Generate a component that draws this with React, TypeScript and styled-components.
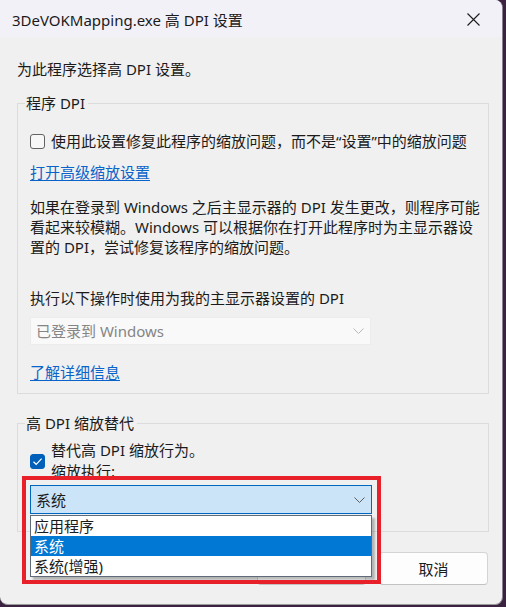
import { createGlobalStyle } from "styled-components";
import styled from "styled-components";

const GlobalStyle = createGlobalStyle`
    html, body {
        margin: 0;
        padding: 0;
        background: #3b2240;
    }
    body {
        font-family: "Noto Sans", "Noto Sans CJK SC", sans-serif;
        font-size: 15px;
        color: #1b1b1b;
    }
`;

const options = ["应用程序", "系统", "系统(增强)"];

export default function App() {
    return (
        <>
            <GlobalStyle />
            <Window>
                <TitleBar>
                    <Title>3DeVOKMapping.exe 高 DPI 设置</Title>
                    <CloseButton aria-label="Close">
                        <svg width="13" height="13" viewBox="0 0 13 13">
                            <path d="M0.5 0.5L12.5 12.5M12.5 0.5L0.5 12.5" stroke="#1b1b1b" strokeWidth="1.1" />
                        </svg>
                    </CloseButton>
                </TitleBar>

                <Body>
                    <Intro>为此程序选择高 DPI 设置。</Intro>

                    <Group $padBottom={11}>
                        <Legend>程序 DPI</Legend>
                        <CheckRow $top={18}>
                            <CheckBox $checked={false} />
                            <CheckText>使用此设置修复此程序的缩放问题，而不是“设置”中的缩放问题</CheckText>
                        </CheckRow>
                        <Link $top={11}>打开高级缩放设置</Link>
                        <Paragraph>
                            如果在登录到 Windows 之后主显示器的 DPI 发生更改，则程序可能看起来较模糊。Windows 可以根据你在打开此程序时为主显示器设置的 DPI，尝试修复该程序的缩放问题。
                        </Paragraph>
                        <Label>执行以下操作时使用为我的主显示器设置的 DPI</Label>
                        <Select $disabled>
                            <span>已登录到 Windows</span>
                            <Chevron color="#b8b8b8" />
                        </Select>
                        <Link $top={17}>了解详细信息</Link>
                    </Group>

                    <Group $padBottom={17} $top={19}>
                        <Legend>高 DPI 缩放替代</Legend>
                        <CheckRow $top={7}>
                            <CheckBox $checked>
                                <svg width="11" height="9" viewBox="0 0 11 9">
                                    <path d="M1.5 4.8L4.2 7.3L9.6 1.6" fill="none" stroke="#fff" strokeWidth="1.2" />
                                </svg>
                            </CheckBox>
                            <CheckLines>
                                <span>替代高 DPI 缩放行为。</span>
                                <span>缩放执行:</span>
                            </CheckLines>
                        </CheckRow>
                        <ComboWrap>
                            <Select $focused>
                                <span>系统</span>
                                <Chevron color="#5d5d5d" />
                            </Select>
                            <OptionList>
                                {options.map((o) => (
                                    <Option key={o} $selected={o === "系统"}>{o}</Option>
                                ))}
                            </OptionList>
                            <Highlight />
                        </ComboWrap>
                    </Group>

                    <ButtonRow>
                        <Button>确定</Button>
                        <Button>取消</Button>
                    </ButtonRow>
                </Body>
            </Window>
        </>
    );
}

const Chevron = ({ color }: { color: string }) => (
    <svg width="11" height="6" viewBox="0 0 11 6">
        <path d="M0.5 0.5L5.5 5.5L10.5 0.5" fill="none" stroke={color} strokeWidth="1" />
    </svg>
);

/* -------------------- Styled Components -------------------- */

const Window = styled.div`
    position: relative;
    width: 502px;
    height: 604px;
    background: #f0f0f0;
    border-right: 1px solid #8a7f8e;
    border-bottom: 1px solid #9a9a9a;
    border-radius: 0 8px 8px 8px;
    overflow: hidden;
    display: flex;
    flex-direction: column;
`;

const TitleBar = styled.div`
    height: 37px;
    flex-shrink: 0;
    background: #f3f1f8;
    display: flex;
    align-items: center;
    justify-content: space-between;
    padding-left: 12px;
`;

const Title = styled.div`
    font-size: 15px;
    line-height: 20px;
    margin-top: 2px;
`;

const CloseButton = styled.div`
    width: 46px;
    height: 37px;
    display: flex;
    align-items: center;
    justify-content: center;
    margin-right: 6px;
    margin-top: 2px;
`;

const Body = styled.div`
    padding: 22px 13px 0 17px;
    display: flex;
    flex-direction: column;
`;

const Intro = styled.div`
    line-height: 20px;
    margin-bottom: 14px;
`;

const Group = styled.fieldset<{ $padBottom: number; $top?: number }>`
    margin: ${({ $top }) => $top ?? 0}px 0 0 0;
    padding: 0 12px ${({ $padBottom }) => $padBottom}px 12px;
    border: 1px solid #dcdcdc;
    min-width: 0;
`;

const Legend = styled.legend`
    padding: 0 3px 0 1px;
    margin-left: -5px;
    line-height: 20px;
`;

const CheckRow = styled.div<{ $top: number }>`
    display: flex;
    align-items: center;
    gap: 6px;
    margin-top: ${({ $top }) => $top}px;
`;

const CheckBox = styled.div<{ $checked: boolean }>`
    width: 15px;
    height: 15px;
    box-sizing: border-box;
    border-radius: 3px;
    flex-shrink: 0;
    display: flex;
    align-items: center;
    justify-content: center;
    background: ${({ $checked }) => ($checked ? "#005fb8" : "#f7f7f7")};
    border: 1px solid ${({ $checked }) => ($checked ? "#005fb8" : "#626262")};
    margin-top: 1px;
`;

const CheckText = styled.span`
    line-height: 20px;
    white-space: nowrap;
`;

const CheckLines = styled.div`
    display: flex;
    flex-direction: column;
    line-height: 21px;
`;

const Link = styled.a<{ $top: number }>`
    display: block;
    align-self: flex-start;
    width: fit-content;
    margin-top: ${({ $top }) => $top}px;
    line-height: 20px;
    color: #0a63c9;
    text-decoration: underline;
    text-underline-offset: 2px;
    cursor: pointer;
`;

const Paragraph = styled.p`
    margin: 15px -9px 0 0;
    line-height: 20px;
`;

const Label = styled.div`
    margin-top: 31px;
    line-height: 20px;
`;

const Select = styled.div<{ $disabled?: boolean; $focused?: boolean }>`
    box-sizing: border-box;
    width: ${({ $focused }) => ($focused ? 342 : 341)}px;
    height: ${({ $focused }) => ($focused ? 29 : 28)}px;
    margin-top: ${({ $disabled }) => ($disabled ? 9 : 0)}px;
    display: flex;
    align-items: center;
    justify-content: space-between;
    padding: 0 6px 0 5px;
    background: ${({ $focused }) => ($focused ? "#cce4f7" : "#f9f9f9")};
    border: 1px solid ${({ $focused }) => ($focused ? "#0067c0" : "#ececec")};
    color: ${({ $disabled }) => ($disabled ? "#858585" : "#1b1b1b")};
    line-height: 20px;
`;

const ComboWrap = styled.div`
    position: relative;
    margin-top: 3px;
    width: 342px;
`;

const OptionList = styled.div`
    position: absolute;
    top: 30px;
    left: 0;
    width: 342px;
    box-sizing: border-box;
    background: #ffffff;
    border: 1px solid #5e6b7a;
    box-shadow: 3px 3px 2px rgba(0, 0, 0, 0.25);
    z-index: 2;
`;

const Option = styled.div<{ $selected: boolean }>`
    height: 20px;
    line-height: 20px;
    padding-left: 3px;
    background: ${({ $selected }) => ($selected ? "#0078d4" : "transparent")};
    color: ${({ $selected }) => ($selected ? "#ffffff" : "#1b1b1b")};
`;

const Highlight = styled.div`
    position: absolute;
    top: -9px;
    left: -8px;
    width: 359px;
    height: 108px;
    box-sizing: border-box;
    border: 4px solid #e8202a;
    z-index: 3;
    pointer-events: none;
`;

const ButtonRow = styled.div`
    display: flex;
    justify-content: flex-end;
    gap: 13px;
    margin-top: 20px;
    padding-right: 1px;
`;

const Button = styled.div`
    width: 109px;
    height: 33px;
    box-sizing: border-box;
    display: flex;
    align-items: center;
    justify-content: center;
    background: #fdfdfd;
    border: 1px solid #d4d4d4;
    border-bottom-color: #c2c2c2;
    border-radius: 4px;
`;
